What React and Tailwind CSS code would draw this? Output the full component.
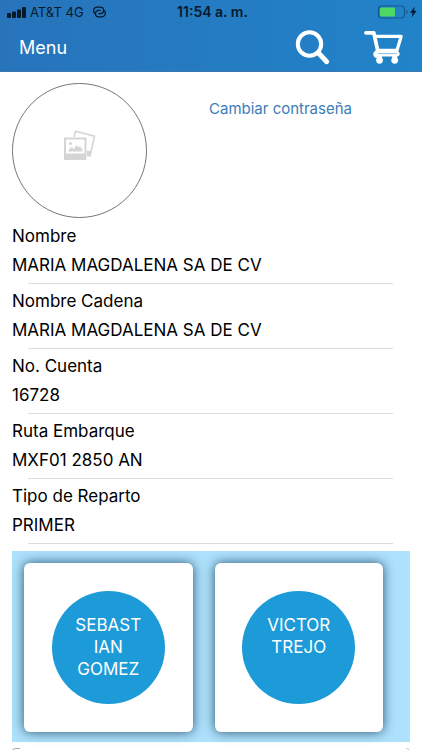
const fields = [
  ["Nombre", "MARIA MAGDALENA SA DE CV"],
  ["Nombre Cadena", "MARIA MAGDALENA SA DE CV"],
  ["No. Cuenta", "16728"],
  ["Ruta Embarque", "MXF01 2850 AN"],
  ["Tipo de Reparto", "PRIMER"],
];

const contacts = ["SEBASTIAN GOMEZ", "VICTOR TREJO"];

function StatusBar() {
  return (
    <div className="grid h-6 grid-cols-3 items-center pl-[7px] pr-1 text-[13px] leading-4 text-[#071a2c]">
      <div className="flex items-center gap-1">
        <svg width="19" height="11" viewBox="0 0 19 11" fill="currentColor" aria-hidden="true">
          <rect x="0" y="6" width="4" height="5" rx="1" />
          <rect x="5" y="4.500" width="4" height="6.500" rx="1" />
          <rect x="10" y="2.500" width="4" height="8.500" rx="1" />
          <rect x="15" y="0" width="4" height="11" rx="1" />
        </svg>
        <span className="whitespace-nowrap">AT&amp;T 4G</span>
        <svg className="ml-1" width="15" height="12" viewBox="0 0 15 12" fill="none" stroke="currentColor" strokeWidth="1.300" strokeLinecap="round" aria-hidden="true">
          <path d="M3.400 7.700A3.500 3.500 0 0 1 4.500 1.200h3.700c2 0 3.400 1.400 3.400 3.100S10.200 7.600 8.200 7.600H6.800" />
          <path d="M11.600 4.300A3.500 3.500 0 0 1 10.500 10.800H6.800c-2 0-3.400-1.400-3.400-3.100s1.400-3.300 3.400-3.300h1.400" />
        </svg>
      </div>
      <span className="whitespace-nowrap text-center text-sm leading-4 font-semibold">11:54 a. m.</span>
      <div className="flex items-center justify-end">
        <svg width="41" height="14" viewBox="0 0 41 14" aria-hidden="true">
          <rect x="1.500" y="1" width="26" height="12" rx="3.500" fill="none" stroke="#17588c" strokeWidth="1.200" />
          <rect x="3" y="2.500" width="15" height="9" rx="1.500" fill="#4cd964" />
          <path d="M29 5v4c1-.3 1.500-1 1.500-2S30 5.300 29 5Z" fill="#17588c" />
          <path d="M38 1.500l-5 6.300h2.700L34.500 12.500l5.200-6.700h-2.800z" fill="#071a2c" />
        </svg>
      </div>
    </div>
  );
}

function SearchIcon() {
  return (
    <svg width="36" height="36" viewBox="0 0 36 36" fill="none" stroke="#fff" strokeLinecap="round" aria-hidden="true">
      <circle cx="14.500" cy="14" r="11.700" strokeWidth="4" />
      <path d="M23.500 23l8.200 8.700" strokeWidth="5" />
    </svg>
  );
}

function CartIcon() {
  return (
    <svg width="40" height="36" viewBox="0 0 40 36" fill="none" stroke="#fff" strokeLinecap="round" strokeLinejoin="round" aria-hidden="true">
      <path d="M2 2.800h7.800l4.200 19" strokeWidth="3.800" />
      <path d="M11.500 6.300h25.700l-4.200 14H14" strokeWidth="3.200" />
      <path d="M12 23.800h21" strokeWidth="5.200" />
      <path d="M14.500 23.600h18" stroke="#79b3df" strokeWidth="0.900" />
      <path d="M12.500 21.500c-2 1-2.500 4.500 0 5.200" strokeWidth="2.600" />
      <circle cx="15.500" cy="30.300" r="3.400" fill="#fff" stroke="none" />
      <circle cx="30.700" cy="30.300" r="3.400" fill="#fff" stroke="none" />
      <path d="M15.500 26.500v3.500M30.700 26.500v3.500" strokeWidth="5" />
    </svg>
  );
}

function PhotosIcon() {
  return (
    <svg width="32" height="32" viewBox="0 0 32 32" aria-hidden="true">
      <path d="M10 8l1.500-5.800 19 5-4.500 19.600-3-.6" fill="none" stroke="#d5d5d5" strokeWidth="1.600" />
      <path d="M23 21.500l4.500 1-1.200 4.800-3.300-.7z" fill="#d5d5d5" />
      <path fillRule="evenodd" d="M0 8.500h22.500V31H0zM2 10.500v14h18.500v-14z" fill="#d5d5d5" />
      <circle cx="6.500" cy="14.500" r="1.600" fill="#d5d5d5" />
      <path d="M4.500 22.500v-1.500l3-3 2.500 2 2.500-4 2 2.500 1.500-1.500 2.500 4v1.500z" fill="#d5d5d5" />
    </svg>
  );
}

export default function App() {
  return (
    <div className="h-screen overflow-hidden bg-white font-[Inter,'Liberation_Sans',sans-serif] text-black">
      <header className="border-b border-[#3a78ad] bg-linear-to-r from-[#2774bb] to-[#2183c9]">
        <StatusBar />
        <nav className="flex h-[47px] items-center justify-between pl-[19px] pr-[18px] text-white">
          <button type="button" className="text-lg">Menu</button>
          <div className="flex items-center gap-[33px]">
            <button type="button" aria-label="Buscar"><SearchIcon /></button>
            <button type="button" aria-label="Carrito"><CartIcon /></button>
          </div>
        </nav>
      </header>
      <main className="px-3 pt-[11px]">
        <section className="flex gap-[62px]">
          <div className="flex size-[135px] shrink-0 items-center justify-center rounded-full border border-[#777] pb-3">
            <PhotosIcon />
          </div>
          <a href="#contrasena" className="mt-[14px] h-6 whitespace-nowrap text-[15px] leading-6 text-[#3b7cb8]">Cambiar contraseña</a>
        </section>
        <dl className="pt-px">
          {fields.map(([label, value]) => (
            <div key={label} className="pt-[3px] text-[17px] leading-7">
              <dt>{label}</dt>
              <dd className="pt-px">{value}</dd>
              <div className="ml-4 mr-[17px] border-b border-[#dcdcdc] pb-1" />
            </div>
          ))}
        </dl>
        <section className="mt-[7px] grid grid-cols-2 gap-[22px] bg-[#aee1fb] pt-3 pr-[27px] pb-[10px] pl-3">
          {contacts.map((name) => (
            <article key={name} className="flex aspect-square items-center justify-center rounded-md bg-white shadow-[0_0_12px_0_#24506f]">
              <button type="button" className="flex size-[113px] items-start justify-center rounded-full bg-[#1d9ad8] px-[22px] pt-[23px] text-[17px] leading-[22px] text-white">
                <span className="min-w-0 wrap-anywhere">{name}</span>
              </button>
            </article>
          ))}
        </section>
        <div className="mt-[6px] flex justify-between">
          <span className="h-10 w-2 rounded-tl-sm border-t border-l border-[#aaa]" />
          <span className="h-10 w-1 rounded-tr-sm border-t border-r border-[#ccc]" />
        </div>
      </main>
    </div>
  );
}
